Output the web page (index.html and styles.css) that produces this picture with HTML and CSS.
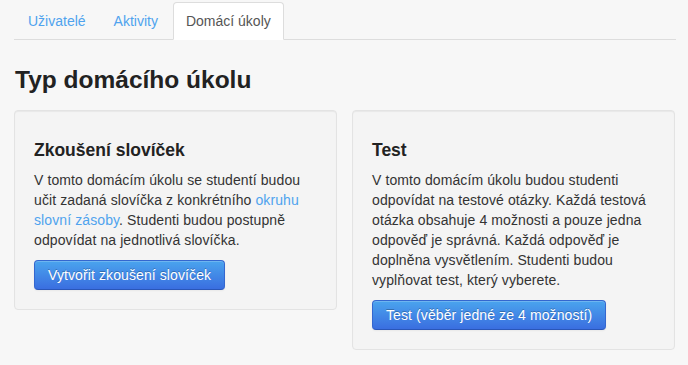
FILE: index.html
```html
<!DOCTYPE html>
<html lang="cs">
<head>
<meta charset="utf-8">
<title>Typ domácího úkolu</title>
<link rel="stylesheet" href="styles.css">
</head>
<body>
<div class="container">
  <ul class="tabs">
    <li class="tab"><a href="#">Uživatelé</a></li>
    <li class="tab"><a href="#">Aktivity</a></li>
    <li class="tab active"><a href="#">Domácí úkoly</a></li>
  </ul>
  <h1 class="title">Typ domácího úkolu</h1>
  <div class="cards">
    <div class="well">
      <h4 class="well-title">Zkoušení slovíček</h4>
      <p class="well-text">V tomto domácím úkolu se studentí budou učit zadaná slovíčka z konkrétního <a href="#" class="link">okruhu slovní zásoby</a>. Studenti budou postupně odpovídat na jednotlivá slovíčka.</p>
      <a href="#" class="btn">Vytvořit zkoušení slovíček</a>
    </div>
    <div class="well">
      <h4 class="well-title">Test</h4>
      <p class="well-text">V tomto domácím úkolu budou studenti odpovídat na testové otázky. Každá testová otázka obsahuje 4 možnosti a pouze jedna odpověď je správná. Každá odpověď je doplněna vysvětlením. Studenti budou vyplňovat test, který vyberete.</p>
      <a href="#" class="btn">Test (věběr jedné ze 4 možností)</a>
    </div>
  </div>
</div>
</body>
</html>
```
FILE: styles.css
```css
* { box-sizing: border-box; }
html, body { margin: 0; padding: 0; }
body {
  background: #f7f7f7;
  font-family: "Liberation Sans", Arial, sans-serif;
  font-size: 14px;
  line-height: 20px;
  letter-spacing: 0.1px;
  color: #333;
}
.container {
  padding: 2px 12px 0 14px;
}
.tabs {
  list-style: none;
  margin: 0;
  padding: 0 0 0 1px;
  display: flex;
  border-bottom: 1px solid #ddd;
  letter-spacing: 0;
}
.tab {
  margin-bottom: -1px;
  margin-right: 2px;
}
.tab a {
  display: block;
  padding: 8px 12px;
  line-height: 20px;
  border: 1px solid transparent;
  border-radius: 4px 4px 0 0;
  color: #4fa3ee;
  text-decoration: none;
}
.tab.active a {
  background: #fff;
  border-color: #ddd #ddd transparent;
  color: #555;
}
.title {
  margin: 20px 0 0 1px;
  font-size: 24.5px;
  line-height: 40px;
  font-weight: bold;
  letter-spacing: 0;
  color: #222;
}
.cards {
  margin-top: 10px;
  display: grid;
  grid-template-columns: 323px 323px;
  column-gap: 15px;
  align-items: start;
}
.well {
  background: #f4f4f4;
  border: 1px solid #e3e3e3;
  border-radius: 4px;
  padding: 19px;
  box-shadow: inset 0 1px 1px rgba(0,0,0,0.05);
}
.well-title {
  margin: 10px 0;
  font-size: 17.5px;
  line-height: 20px;
  font-weight: bold;
  letter-spacing: 0;
  color: #222;
}
.well-text {
  margin: 0 0 10px;
}
.link {
  color: #4fa3ee;
  text-decoration: none;
}
.btn {
  display: inline-block;
  padding: 4px 13px;
  line-height: 20px;
  font-size: 14px;
  color: #fff;
  text-decoration: none;
  text-shadow: 0 -1px 0 rgba(0,0,0,0.25);
  background: linear-gradient(to bottom, #4aa4ee, #3a6ee0);
  border: 1px solid #3467cf;
  border-bottom-color: #2a56b8;
  border-radius: 4px;
  box-shadow: inset 0 1px 0 rgba(255,255,255,0.2), 0 1px 2px rgba(0,0,0,0.05);
}
```
